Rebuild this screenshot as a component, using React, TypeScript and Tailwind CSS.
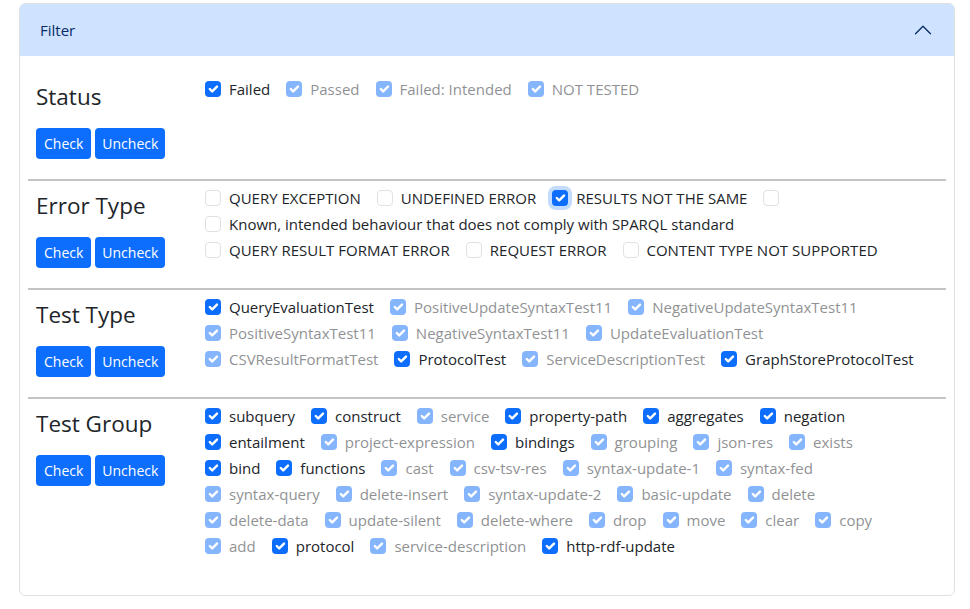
import React from "react"

type Item = { label: string; checked?: boolean; disabled?: boolean; focus?: boolean }

const FONT = { fontFamily: '"Segoe UI", "Open Sans", "Noto Sans", sans-serif' }

const sections: { title: string; rows: Item[][] }[] = [
  {
    title: "Status",
    rows: [
      [
        { label: "Failed", checked: true },
        { label: "Passed", checked: true, disabled: true },
        { label: "Failed: Intended", checked: true, disabled: true },
        { label: "NOT TESTED", checked: true, disabled: true },
      ],
    ],
  },
  {
    title: "Error Type",
    rows: [
      [
        { label: "QUERY EXCEPTION" },
        { label: "UNDEFINED ERROR" },
        { label: "RESULTS NOT THE SAME", checked: true, focus: true },
        { label: "" },
      ],
      [{ label: "Known, intended behaviour that does not comply with SPARQL standard" }],
      [
        { label: "QUERY RESULT FORMAT ERROR" },
        { label: "REQUEST ERROR" },
        { label: "CONTENT TYPE NOT SUPPORTED" },
      ],
    ],
  },
  {
    title: "Test Type",
    rows: [
      [
        { label: "QueryEvaluationTest", checked: true },
        { label: "PositiveUpdateSyntaxTest11", checked: true, disabled: true },
        { label: "NegativeUpdateSyntaxTest11", checked: true, disabled: true },
      ],
      [
        { label: "PositiveSyntaxTest11", checked: true, disabled: true },
        { label: "NegativeSyntaxTest11", checked: true, disabled: true },
        { label: "UpdateEvaluationTest", checked: true, disabled: true },
      ],
      [
        { label: "CSVResultFormatTest", checked: true, disabled: true },
        { label: "ProtocolTest", checked: true },
        { label: "ServiceDescriptionTest", checked: true, disabled: true },
        { label: "GraphStoreProtocolTest", checked: true },
      ],
    ],
  },
  {
    title: "Test Group",
    rows: [
      [
        { label: "subquery", checked: true },
        { label: "construct", checked: true },
        { label: "service", checked: true, disabled: true },
        { label: "property-path", checked: true },
        { label: "aggregates", checked: true },
        { label: "negation", checked: true },
      ],
      [
        { label: "entailment", checked: true },
        { label: "project-expression", checked: true, disabled: true },
        { label: "bindings", checked: true },
        { label: "grouping", checked: true, disabled: true },
        { label: "json-res", checked: true, disabled: true },
        { label: "exists", checked: true, disabled: true },
      ],
      [
        { label: "bind", checked: true },
        { label: "functions", checked: true },
        { label: "cast", checked: true, disabled: true },
        { label: "csv-tsv-res", checked: true, disabled: true },
        { label: "syntax-update-1", checked: true, disabled: true },
        { label: "syntax-fed", checked: true, disabled: true },
      ],
      [
        { label: "syntax-query", checked: true, disabled: true },
        { label: "delete-insert", checked: true, disabled: true },
        { label: "syntax-update-2", checked: true, disabled: true },
        { label: "basic-update", checked: true, disabled: true },
        { label: "delete", checked: true, disabled: true },
      ],
      [
        { label: "delete-data", checked: true, disabled: true },
        { label: "update-silent", checked: true, disabled: true },
        { label: "delete-where", checked: true, disabled: true },
        { label: "drop", checked: true, disabled: true },
        { label: "move", checked: true, disabled: true },
        { label: "clear", checked: true, disabled: true },
        { label: "copy", checked: true, disabled: true },
      ],
      [
        { label: "add", checked: true, disabled: true },
        { label: "protocol", checked: true },
        { label: "service-description", checked: true, disabled: true },
        { label: "http-rdf-update", checked: true },
      ],
    ],
  },
]

function CheckBox({ checked, focus }: { checked?: boolean; focus?: boolean }) {
  if (!checked) {
    return <span className="mt-[4px] h-4 w-4 shrink-0 rounded-[4px] border border-[#dee2e6] bg-white" />
  }
  return (
    <span
      className={
        "mt-[4px] flex h-4 w-4 shrink-0 items-center justify-center rounded-[4px] bg-[#0d6efd] " +
        (focus ? "shadow-[0_0_0_4px_rgba(13,110,253,0.25)]" : "")
      }
    >
      <svg viewBox="0 0 20 20" className="h-4 w-4">
        <path d="m6 10 3 3 6-6" fill="none" stroke="#fff" strokeWidth="3" strokeLinecap="round" strokeLinejoin="round" />
      </svg>
    </span>
  )
}

function Check({ item }: { item: Item }) {
  return (
    <label className={"mr-4 mb-[2px] flex h-6 items-start " + (item.disabled ? "opacity-50" : "")}>
      <CheckBox checked={item.checked} focus={item.focus} />
      {item.label && <span className="ml-2 leading-6 whitespace-nowrap">{item.label}</span>}
    </label>
  )
}

function Section({ title, rows, first, last }: { title: string; rows: Item[][]; first?: boolean; last?: boolean }) {
  return (
    <>
      <div className={"flex " + (first ? "pt-[4px] " : "pt-[5px] ") + (last ? "pb-[21px]" : "pb-[20px]")}>
        <div className="w-[177px] shrink-0 pl-[8px]">
          <h4 className="mt-[5px] text-[22.5px] leading-[29px] font-normal">{title}</h4>
          <div className="mt-[17px] flex gap-1">
            <button className="h-[31px] rounded-[4px] bg-[#0d6efd] px-2 text-[14px] text-white">Check</button>
            <button className="h-[31px] rounded-[4px] bg-[#0d6efd] px-[7px] text-[14px] text-white">Uncheck</button>
          </div>
        </div>
        <div className="flex flex-col">
          {rows.map((row, i) => (
            <div key={i} className="flex">
              {row.map((item, j) => (
                <Check key={j} item={item} />
              ))}
            </div>
          ))}
        </div>
      </div>
      {!last && <div className="h-[2px] bg-[#c4c4c4]" />}
    </>
  )
}

export default function App() {
  return (
    <div className="min-h-screen bg-white pt-[3px] pl-[19px] text-[15px] text-[#212529]" style={FONT}>
      <div className="w-[936px] overflow-hidden rounded-[6px] border border-[#dee2e6]">
        <div className="flex h-[52px] items-center justify-between bg-[#cfe2ff] pr-[21px] pl-5 text-[#052c65]">
          <span>Filter</span>
          <svg viewBox="0 0 16 16" className="h-5 w-5">
            <path d="M2 11L8 5L14 11" fill="none" stroke="#052c65" strokeLinecap="round" strokeLinejoin="round" />
          </svg>
        </div>
        <div className="px-[8px] pt-[17px] pb-[14px]">
          {sections.map((s, i) => (
            <Section
              key={s.title}
              title={s.title}
              rows={s.rows}
              first={i === 0}
              last={i === sections.length - 1}
            />
          ))}
        </div>
      </div>
    </div>
  )
}
